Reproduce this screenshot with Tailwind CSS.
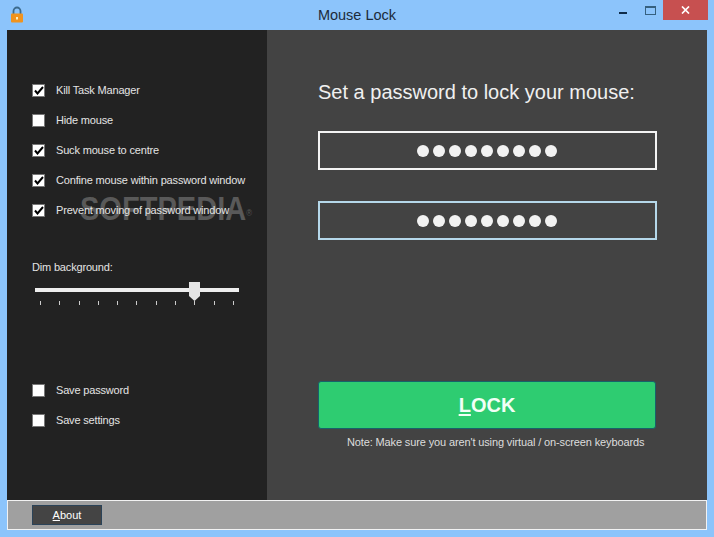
<!DOCTYPE html>
<html lang="en">
<head>
    <meta charset="UTF-8">
    <title>Mouse Lock</title>
    <script src="https://cdn.jsdelivr.net/npm/@tailwindcss/browser@4"></script>
</head>
<body class="bg-[#8cc4fb] w-[714px] h-[537px] overflow-hidden font-['Liberation_Sans',Arial,sans-serif]">
    <!-- title bar -->
    <div class="h-[30px] flex items-start relative">
        <svg class="ml-[10px] mt-[6px]" width="14" height="17" viewBox="0 0 14 17">
            <path d="M3.5 8V5a3.500 3.500 0 0 1 7 0v3" fill="none" stroke="#3c6a8c" stroke-width="1.800"/>
            <rect x="1" y="7.500" width="12" height="9" rx="1" fill="#f0931e"/>
            <rect x="6" y="11" width="2" height="2.500" fill="#fff0c0"/>
        </svg>
        <div class="absolute left-0 right-0 top-[6px] text-center text-[14.500px] leading-[18px] text-[#1c2b3a]">Mouse Lock</div>
        <div class="ml-auto mr-[6px] flex items-start">
            <div class="w-[8px] h-[2px] bg-[#0f2c4a] mt-[12px] mr-[18px]"></div>
            <div class="w-[11px] h-[9px] border border-[#35607f] border-t-2 mt-[6px] mr-[7px]"></div>
            <div class="w-[45px] h-[20px] bg-[#c75050] text-white flex items-center justify-center">
                <svg width="9" height="8" viewBox="0 0 9 8"><path d="M1 .5l7 7M8 .5l-7 7" stroke="#fff" stroke-width="1.700"/></svg>
            </div>
        </div>
    </div>

    <div class="mx-[7px] w-[700px] h-[500px] flex flex-col">
        <div class="h-[470px] flex">
            <!-- left panel -->
            <div class="w-[260px] bg-[#222222] relative text-[11px] tracking-[-0.17px] leading-[14px] text-[#e4e4e4] whitespace-nowrap">
                <!-- watermark -->
                <div class="absolute left-[73px] top-[161px] text-[33px] leading-[36px] font-bold text-white/25 tracking-[0px] origin-left scale-x-[0.88]">SOFTPEDIA<sup class="text-[9px] font-normal">®</sup></div>

                <div class="relative pt-[53px] pl-[25px] flex flex-col gap-[16px]">
                    <label class="flex items-center gap-[11px] h-[14px]">
                        <span class="w-[13px] h-[13px] bg-white border border-[#777] flex items-center justify-center"><svg width="10" height="9" viewBox="0 0 10 9"><path d="M1 4.500l2.500 3L9 1" fill="none" stroke="#000" stroke-width="2"/></svg></span>
                        Kill Task Manager
                    </label>
                    <label class="flex items-center gap-[11px] h-[14px]">
                        <span class="w-[13px] h-[13px] bg-white border border-[#777]"></span>
                        Hide mouse
                    </label>
                    <label class="flex items-center gap-[11px] h-[14px]">
                        <span class="w-[13px] h-[13px] bg-white border border-[#777] flex items-center justify-center"><svg width="10" height="9" viewBox="0 0 10 9"><path d="M1 4.500l2.500 3L9 1" fill="none" stroke="#000" stroke-width="2"/></svg></span>
                        Suck mouse to centre
                    </label>
                    <label class="flex items-center gap-[11px] h-[14px]">
                        <span class="w-[13px] h-[13px] bg-white border border-[#777] flex items-center justify-center"><svg width="10" height="9" viewBox="0 0 10 9"><path d="M1 4.500l2.500 3L9 1" fill="none" stroke="#000" stroke-width="2"/></svg></span>
                        Confine mouse within password window
                    </label>
                    <label class="flex items-center gap-[11px] h-[14px]">
                        <span class="w-[13px] h-[13px] bg-white border border-[#777] flex items-center justify-center"><svg width="10" height="9" viewBox="0 0 10 9"><path d="M1 4.500l2.500 3L9 1" fill="none" stroke="#000" stroke-width="2"/></svg></span>
                        Prevent moving of password window
                    </label>
                </div>

                <div class="mt-[43px] pl-[25px]">Dim background:</div>

                <!-- slider -->
                <div class="mt-[14px] ml-[28px] w-[204px] relative">
                    <div class="h-[4px] bg-[#eeeeee]"></div>
                    <svg class="absolute left-[154px] top-[-6px]" width="11" height="19" viewBox="0 0 11 19"><path d="M0 0h11v14l-5.500 5L0 14z" fill="#e4e4e4"/></svg>
                    <div class="flex justify-between px-[5px] mt-[9px]">
                        <i class="w-px h-[4px] bg-[#cccccc]"></i><i class="w-px h-[4px] bg-[#cccccc]"></i><i class="w-px h-[4px] bg-[#cccccc]"></i><i class="w-px h-[4px] bg-[#cccccc]"></i><i class="w-px h-[4px] bg-[#cccccc]"></i><i class="w-px h-[4px] bg-[#cccccc]"></i><i class="w-px h-[4px] bg-[#cccccc]"></i><i class="w-px h-[4px] bg-[#cccccc]"></i><i class="w-px h-[4px] bg-[#cccccc]"></i><i class="w-px h-[4px] bg-[#cccccc]"></i><i class="w-px h-[4px] bg-[#cccccc]"></i>
                    </div>
                </div>

                <div class="mt-[78px] pl-[25px] flex flex-col gap-[16px]">
                    <label class="flex items-center gap-[11px] h-[14px]">
                        <span class="w-[13px] h-[13px] bg-white border border-[#777]"></span>
                        Save password
                    </label>
                    <label class="flex items-center gap-[11px] h-[14px]">
                        <span class="w-[13px] h-[13px] bg-white border border-[#777]"></span>
                        Save settings
                    </label>
                </div>
            </div>

            <!-- right panel -->
            <div class="w-[440px] bg-[#434343] pl-[51px] text-white">
                <h1 class="mt-[50px] text-[20px] leading-[24px] text-[#f0f0f0]">Set a password to lock your mouse:</h1>
                <div class="mt-[27px] w-[339px] h-[39px] border-2 border-[#f4f4f4] flex items-center justify-center gap-[4px] pr-[2px]">
                    <i class="w-[12px] h-[12px] rounded-full bg-[#f2f2f2]"></i><i class="w-[12px] h-[12px] rounded-full bg-[#f2f2f2]"></i><i class="w-[12px] h-[12px] rounded-full bg-[#f2f2f2]"></i><i class="w-[12px] h-[12px] rounded-full bg-[#f2f2f2]"></i><i class="w-[12px] h-[12px] rounded-full bg-[#f2f2f2]"></i><i class="w-[12px] h-[12px] rounded-full bg-[#f2f2f2]"></i><i class="w-[12px] h-[12px] rounded-full bg-[#f2f2f2]"></i><i class="w-[12px] h-[12px] rounded-full bg-[#f2f2f2]"></i><i class="w-[12px] h-[12px] rounded-full bg-[#f2f2f2]"></i>
                </div>
                <div class="mt-[31px] w-[339px] h-[39px] border-2 border-[#b5d8ea] flex items-center justify-center gap-[4px] pr-[2px]">
                    <i class="w-[12px] h-[12px] rounded-full bg-[#f2f2f2]"></i><i class="w-[12px] h-[12px] rounded-full bg-[#f2f2f2]"></i><i class="w-[12px] h-[12px] rounded-full bg-[#f2f2f2]"></i><i class="w-[12px] h-[12px] rounded-full bg-[#f2f2f2]"></i><i class="w-[12px] h-[12px] rounded-full bg-[#f2f2f2]"></i><i class="w-[12px] h-[12px] rounded-full bg-[#f2f2f2]"></i><i class="w-[12px] h-[12px] rounded-full bg-[#f2f2f2]"></i><i class="w-[12px] h-[12px] rounded-full bg-[#f2f2f2]"></i><i class="w-[12px] h-[12px] rounded-full bg-[#f2f2f2]"></i>
                </div>
                <button class="mt-[141px] w-[338px] h-[48px] bg-[#2ecc71] border border-[#17616a] rounded-[3px] text-[20px] font-bold text-[#f2fff6] flex items-center justify-center pb-[1px]"><span class="underline underline-offset-2">L</span>OCK</button>
                <div class="mt-[6px] ml-[29px] text-[11px] tracking-[-0.13px] leading-[14px] text-[#dddddd] whitespace-nowrap">Note: Make sure you aren't using virtual / on-screen keyboards</div>
            </div>
        </div>

        <!-- footer -->
        <div class="h-[30px] bg-[#a0a0a0] border border-[#f2f2f2] pl-[24px] pt-[4px]">
            <button class="w-[70px] h-[20px] bg-[#444444] border border-[#2b4358] text-[11px] text-white flex items-center justify-center"><span class="underline">A</span>bout</button>
        </div>
    </div>
</body>
</html>
